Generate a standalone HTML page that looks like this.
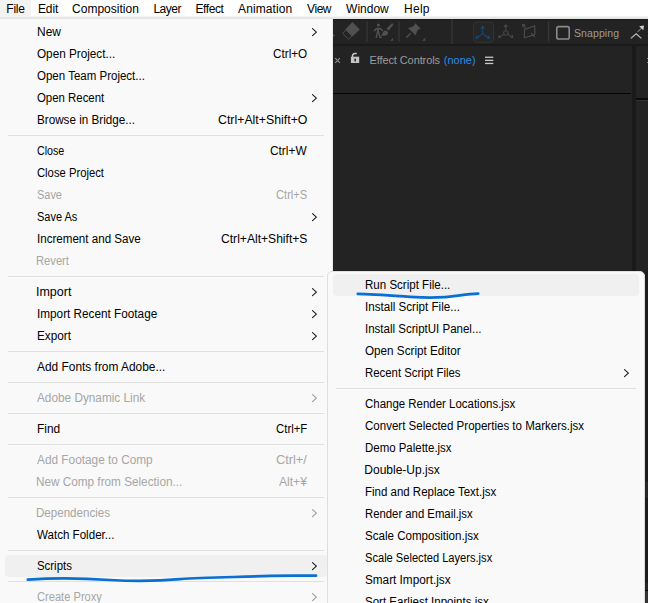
<!DOCTYPE html>
<html><head><meta charset="utf-8">
<style>
*{margin:0;padding:0;box-sizing:border-box}
html,body{width:648px;height:603px;overflow:hidden;background:#232323;font-family:"Liberation Sans",sans-serif;position:relative}
.abs{position:absolute}
#menubar{position:absolute;left:0;top:0;width:648px;height:19px;background:linear-gradient(to bottom,#ffffff 0px,#ffffff 16px,#f4f4f4 16px,#f4f4f4 17px,#e8e8e8 17px,#e8e8e8 18px,#e4e4e4 18px)}
#menubar span{position:absolute;top:3px;font-size:12px;color:#000;line-height:13px;white-space:nowrap}
#filehl{position:absolute;left:0;top:0;width:31px;height:16px;background:#f3f3f3}
#dark{position:absolute;left:333px;top:19px;width:315px;height:584px;background:#232323}
.menu{position:absolute;background:#f9f9f9}
#main{left:-8px;top:19px;width:341px;height:600px;border-right:1px solid #e8e8e8}
#sub{left:327px;top:271px;width:318px;height:360px;border:1px solid #dedede;border-radius:5px}
.it{position:absolute;height:22px;font-size:12px;line-height:22px;white-space:nowrap}
.sc{position:absolute;height:22px;font-size:12px;line-height:22px;white-space:nowrap;text-align:right}
.sep{position:absolute;height:1px;background:#e0e0e0}
.hl{position:absolute;height:22px;background:#f0f0f0;border-radius:4px}
</style></head><body>
<div id="dark"></div>
<div class="abs toptb" style="left:333px;top:19px;width:315px;height:1px;background:#1b1b1b"></div>
<div class="abs" style="left:333px;top:44px;width:315px;height:2px;background:#1a1a1a"></div>
<div class="abs" style="left:632px;top:46px;width:4px;height:557px;background:#1a1a1a"></div>
<div class="abs" style="left:333px;top:93px;width:298px;height:1px;background:#050505"></div>
<div class="abs" style="left:636px;top:98px;width:12px;height:1.5px;background:#0b0b0b"></div>
<div class="abs" style="left:636px;top:99.5px;width:12px;height:1px;background:#343434"></div>
<div class="abs" style="left:645px;top:271px;width:3px;height:332px;background:#1d1d1d"></div>
<div class="abs" style="left:645px;top:482px;width:3px;height:16px;background:#272727"></div>
<div class="abs" style="left:645px;top:583px;width:3px;height:7px;background:#262626"></div>
<div class="abs" style="left:645px;top:590px;width:3px;height:1px;background:#050505"></div>
<div class="abs" style="left:645px;top:591px;width:3px;height:12px;background:#333333"></div>
<svg class="abs" style="left:333px;top:19px" width="315" height="26" viewBox="333 19 315 26">
  <g fill="#565656">
    <circle cx="333.8" cy="35.5" r="0.9"/>
    <!-- eraser -->
    <path d="M352.5,22 L359.8,29.5 L352.5,36.4 L345.4,29.2 Z" fill="#505050"/>
    <path d="M346,29.8 L352,35.8 L348.5,39.2 L342.6,33.3 Z" fill="none" stroke="#4e4e4e" stroke-width="1" stroke-linejoin="round"/>
  </g>
  <rect x="366.3" y="21.3" width="1.4" height="20.4" fill="#353535"/>
  <rect x="398.3" y="21.3" width="1.4" height="20.4" fill="#353535"/>
  <rect x="451.3" y="19" width="1.4" height="25" fill="#353535"/>
  <rect x="547.8" y="21.3" width="1.4" height="20.4" fill="#353535"/>
  <!-- puppet + brush -->
  <g fill="#505050" stroke="#505050">
    <circle cx="378.4" cy="25" r="1.6" stroke="none"/>
    <path d="M378,28.4 L378,33.2" fill="none" stroke-width="2.2"/>
    <path d="M374.4,30.8 L376.4,28.4 L380,28.4 L382.4,30.4" fill="none" stroke-width="1.5" stroke-linecap="round" stroke-linejoin="round"/>
    <path d="M377.4,32.6 L376.3,37.4 M378.8,32.6 L379.8,37.1 L381.2,37.5" fill="none" stroke-width="1.5" stroke-linecap="round"/>
    <path d="M392.2,23 L393.6,24.4 L388.6,30.6 L386.4,28.8 Z" stroke="none"/>
    <path d="M385.2,30.4 C387.8,30.6 388.8,33 387.4,34.5 C386,36 383,35.9 380.8,35.7 C382.6,34.2 382.6,31 385.2,30.4 Z" stroke="none"/>
    <path d="M393.1,38 L393.1,40.8 L390.1,40.8 Z" stroke="none"/>
  </g>
  <!-- pin -->
  <g fill="#505050">
    <path d="M415.4,23.2 L420.6,28.4 L418,29.8 L416.6,32.2 L415.8,35.6 L408,28 L411.2,27.2 L413.8,25.8 Z"/>
    <path d="M410.3,33.7 L406.6,37.2" stroke="#505050" stroke-width="1.35" stroke-linecap="round"/>
    <path d="M425.3,37.8 L425.3,40.8 L422.2,40.8 Z"/>
  </g>
  <!-- axis button -->
  <rect x="473.7" y="22.3" width="19.8" height="20" rx="3" fill="#262626" stroke="#333" stroke-width="1"/>
  <g stroke="#1c4570" stroke-width="1.1" fill="none" stroke-linecap="round">
    <path d="M482.6,33.8 L482.6,26.5 M482.6,33.8 L476.3,38.2 M482.6,33.8 L489.1,38.2"/>
  </g>
  <g fill="#1c4570">
    <path d="M482.6,25.2 L485.2,28.6 L480,28.6 Z"/>
    <path d="M475.4,38.9 L476.3,34.9 L479,38.3 Z"/>
    <path d="M490,38.9 L486.2,38.3 L488.9,34.9 Z"/>
  </g>
  <g stroke="#454545" stroke-width="1.1" fill="none" stroke-linecap="round">
    <circle cx="505.8" cy="33" r="2.2"/>
    <path d="M505.8,30.8 L505.8,25.3 M504,34.2 L499.2,37.3 M507.6,34.2 L512.4,37.3"/>
  </g>
  <g fill="#4a4a4a">
    <path d="M505.8,24 L508,27 L503.6,27 Z"/>
    <path d="M498.2,38 L498.8,34.6 L501.2,37.4 Z"/>
    <path d="M513.4,38 L510.4,37.4 L512.8,34.6 Z"/>
  </g>
  <g stroke="#4a4a4a" stroke-width="1.2" fill="none" stroke-linecap="round" stroke-linejoin="round">
    <path d="M524.4,29.6 L534.8,25.8 L534.8,34.6 L524.4,37.8 Z"/>
    <path d="M525.6,27.6 L523,25 M531.5,33.5 L534.4,36.6"/>
  </g>
  <path d="M521.8,23.8 L525.8,24.6 L522.6,27.8 Z" fill="#4a4a4a"/>
  <!-- checkbox -->
  <rect x="556.8" y="26.6" width="12.4" height="12.4" rx="1.8" fill="none" stroke="#8a8a8a" stroke-width="1.6"/>
  <!-- snap icon -->
  <path d="M630.8,38.4 L636.2,33.9 L641.4,38.4" fill="none" stroke="#bdbdbd" stroke-width="1.2"/>
  <path d="M637.8,31.8 L641.4,28.2" stroke="#a8a8a8" stroke-width="1"/>
  <path d="M644,25.4 L643.3,30.2 L639.2,26.2 Z" fill="#d0d0d0"/>
</svg>
<div class="abs" style="left:574px;top:25.5px;font-size:10.5px;line-height:14px;color:#9c9c9c;white-space:nowrap;letter-spacing:0.1px">Snapping</div>
<!-- panel header -->
<svg class="abs" style="left:333px;top:45px" width="170" height="30" viewBox="333 45 170 30">
  <path d="M335.2,58.2 L339.9,62.8 M339.9,58.2 L335.2,62.8" stroke="#8e8e8e" stroke-width="1.1"/>
  <path d="M352.5,57.2 L352.5,55.6 C352.6,53.8 354.4,53 356.8,53.6" fill="none" stroke="#c4c4c4" stroke-width="1.5"/>
  <rect x="350.9" y="56.7" width="8.3" height="6.3" fill="#c4c4c4"/>
  <rect x="354.4" y="58.6" width="1.5" height="2.8" fill="#232323"/>
  <g fill="#c8c8c8">
    <rect x="485" y="56.6" width="8.3" height="1.3"/>
    <rect x="485" y="59.7" width="8.3" height="1.3"/>
    <rect x="485" y="62.8" width="8.3" height="1.3"/>
  </g>
</svg>
<div class="abs" style="left:369.5px;top:53px;font-size:11px;line-height:14px;color:#9c9c9c;white-space:nowrap;letter-spacing:-0.1px">Effect Controls</div>
<div class="abs" style="left:443.8px;top:53px;font-size:11px;line-height:14px;color:#2d8ae4;white-space:nowrap">(none)</div>
<div class="abs" style="left:646.5px;top:58px;width:1.5px;height:1.2px;background:#888"></div>
<div class="abs" style="left:646.5px;top:61.8px;width:1.5px;height:1.2px;background:#888"></div>

<div id="menubar">
  <div id="filehl"></div>
  <span style="left:6.30px;letter-spacing:-0.225px">File</span>
  <span style="left:38.00px;letter-spacing:-0.15px">Edit</span>
  <span style="left:72.00px;letter-spacing:0.02px">Composition</span>
  <span style="left:153.40px;letter-spacing:-0.475px">Layer</span>
  <span style="left:195.40px;letter-spacing:-0.4px">Effect</span>
  <span style="left:238.10px;letter-spacing:0.075px">Animation</span>
  <span style="left:307.10px;letter-spacing:-0.45px">View</span>
  <span style="left:346.10px;letter-spacing:0.0px">Window</span>
  <span style="left:404.10px;letter-spacing:0.25px">Help</span>
</div>
<div class="menu" id="main"></div>
<div class="it" style="left:37.40px;top:21px;color:#000000;transform:scaleX(0.9957);transform-origin:0 0">New</div>
<svg class="abs" style="left:310px;top:26.0px" width="9" height="12" viewBox="0 0 9 12"><polyline points="2.5,2.6 6.4,6.1 2.5,9.6" fill="none" stroke="#1a1a1a" stroke-width="1.1" stroke-linecap="round" stroke-linejoin="round"/></svg>
<div class="it" style="left:37.40px;top:43px;color:#000000;transform:scaleX(0.9772);transform-origin:0 0">Open Project...</div>
<div class="it" style="left:272.70px;top:43px;color:#000000;transform:scaleX(0.9771);transform-origin:0 0">Ctrl+O</div>
<div class="it" style="left:37.40px;top:65px;color:#000000;transform:scaleX(0.9589);transform-origin:0 0">Open Team Project...</div>
<div class="it" style="left:37.40px;top:87px;color:#000000;transform:scaleX(0.9507);transform-origin:0 0">Open Recent</div>
<svg class="abs" style="left:310px;top:92.0px" width="9" height="12" viewBox="0 0 9 12"><polyline points="2.5,2.6 6.4,6.1 2.5,9.6" fill="none" stroke="#1a1a1a" stroke-width="1.1" stroke-linecap="round" stroke-linejoin="round"/></svg>
<div class="it" style="left:37.43px;top:109px;color:#000000;transform:scaleX(0.9737);transform-origin:0 0">Browse in Bridge...</div>
<div class="it" style="left:217.50px;top:109px;color:#000000;transform:scaleX(1.0276);transform-origin:0 0">Ctrl+Alt+Shift+O</div>
<div class="sep" style="left:8px;top:135px;width:316px"></div>
<div class="it" style="left:37.40px;top:140px;color:#000000;transform:scaleX(0.8903);transform-origin:0 0">Close</div>
<div class="it" style="left:270.30px;top:140px;color:#000000;transform:scaleX(0.9892);transform-origin:0 0">Ctrl+W</div>
<div class="it" style="left:37.40px;top:162px;color:#000000;transform:scaleX(0.9375);transform-origin:0 0">Close Project</div>
<div class="it" style="left:37.49px;top:184px;color:#a6a6a6;transform:scaleX(0.9115);transform-origin:0 0">Save</div>
<div class="it" style="left:276.30px;top:184px;color:#a6a6a6;transform:scaleX(0.9294);transform-origin:0 0">Ctrl+S</div>
<div class="it" style="left:37.48px;top:206px;color:#000000;transform:scaleX(0.9163);transform-origin:0 0">Save As</div>
<svg class="abs" style="left:310px;top:211.0px" width="9" height="12" viewBox="0 0 9 12"><polyline points="2.5,2.6 6.4,6.1 2.5,9.6" fill="none" stroke="#1a1a1a" stroke-width="1.1" stroke-linecap="round" stroke-linejoin="round"/></svg>
<div class="it" style="left:37.43px;top:228px;color:#000000;transform:scaleX(0.966);transform-origin:0 0">Increment and Save</div>
<div class="it" style="left:221.20px;top:228px;color:#000000;transform:scaleX(1.0081);transform-origin:0 0">Ctrl+Alt+Shift+S</div>
<div class="it" style="left:36.47px;top:250px;color:#a6a6a6;transform:scaleX(0.9314);transform-origin:0 0">Revert</div>
<div class="sep" style="left:8px;top:276px;width:316px"></div>
<div class="it" style="left:36.36px;top:281px;color:#000000;transform:scaleX(1.0394);transform-origin:0 0">Import</div>
<svg class="abs" style="left:310px;top:286.0px" width="9" height="12" viewBox="0 0 9 12"><polyline points="2.5,2.6 6.4,6.1 2.5,9.6" fill="none" stroke="#1a1a1a" stroke-width="1.1" stroke-linecap="round" stroke-linejoin="round"/></svg>
<div class="it" style="left:37.42px;top:303px;color:#000000;transform:scaleX(0.9795);transform-origin:0 0">Import Recent Footage</div>
<svg class="abs" style="left:310px;top:308.0px" width="9" height="12" viewBox="0 0 9 12"><polyline points="2.5,2.6 6.4,6.1 2.5,9.6" fill="none" stroke="#1a1a1a" stroke-width="1.1" stroke-linecap="round" stroke-linejoin="round"/></svg>
<div class="it" style="left:37.42px;top:325px;color:#000000;transform:scaleX(0.9794);transform-origin:0 0">Export</div>
<svg class="abs" style="left:310px;top:330.0px" width="9" height="12" viewBox="0 0 9 12"><polyline points="2.5,2.6 6.4,6.1 2.5,9.6" fill="none" stroke="#1a1a1a" stroke-width="1.1" stroke-linecap="round" stroke-linejoin="round"/></svg>
<div class="sep" style="left:8px;top:351px;width:316px"></div>
<div class="it" style="left:37.40px;top:356px;color:#000000;transform:scaleX(0.9922);transform-origin:0 0">Add Fonts from Adobe...</div>
<div class="sep" style="left:8px;top:382px;width:316px"></div>
<div class="it" style="left:37.40px;top:387px;color:#a6a6a6;transform:scaleX(0.9827);transform-origin:0 0">Adobe Dynamic Link</div>
<svg class="abs" style="left:310px;top:392.0px" width="9" height="12" viewBox="0 0 9 12"><polyline points="2.5,2.6 6.4,6.1 2.5,9.6" fill="none" stroke="#9a9a9a" stroke-width="1.1" stroke-linecap="round" stroke-linejoin="round"/></svg>
<div class="sep" style="left:8px;top:413px;width:316px"></div>
<div class="it" style="left:37.40px;top:418px;color:#000000;transform:scaleX(0.9955);transform-origin:0 0">Find</div>
<div class="it" style="left:275.60px;top:418px;color:#000000;transform:scaleX(0.9485);transform-origin:0 0">Ctrl+F</div>
<div class="sep" style="left:8px;top:444px;width:316px"></div>
<div class="it" style="left:37.40px;top:449px;color:#a6a6a6;transform:scaleX(0.9855);transform-origin:0 0">Add Footage to Comp</div>
<div class="it" style="left:276.10px;top:449px;color:#a6a6a6;transform:scaleX(1.0621);transform-origin:0 0">Ctrl+/</div>
<div class="it" style="left:36.42px;top:471px;color:#a6a6a6;transform:scaleX(0.9791);transform-origin:0 0">New Comp from Selection...</div>
<div class="it" style="left:278.70px;top:471px;color:#a6a6a6;transform:scaleX(1.0071);transform-origin:0 0">Alt+¥</div>
<div class="sep" style="left:8px;top:497px;width:316px"></div>
<div class="it" style="left:36.44px;top:502px;color:#a6a6a6;transform:scaleX(0.9645);transform-origin:0 0">Dependencies</div>
<svg class="abs" style="left:310px;top:507.0px" width="9" height="12" viewBox="0 0 9 12"><polyline points="2.5,2.6 6.4,6.1 2.5,9.6" fill="none" stroke="#9a9a9a" stroke-width="1.1" stroke-linecap="round" stroke-linejoin="round"/></svg>
<div class="it" style="left:37.40px;top:524px;color:#000000;transform:scaleX(0.965);transform-origin:0 0">Watch Folder...</div>
<div class="sep" style="left:8px;top:550px;width:316px"></div>
<div class="hl" style="left:5px;top:555px;width:321.5px"></div>
<div class="it" style="left:37.45px;top:555px;color:#000000;transform:scaleX(0.95);transform-origin:0 0">Scripts</div>
<svg class="abs" style="left:310px;top:560.0px" width="9" height="12" viewBox="0 0 9 12"><polyline points="2.5,2.6 6.4,6.1 2.5,9.6" fill="none" stroke="#1a1a1a" stroke-width="1.1" stroke-linecap="round" stroke-linejoin="round"/></svg>
<div class="sep" style="left:8px;top:581px;width:316px"></div>
<div class="it" style="left:37.40px;top:586px;color:#a6a6a6;transform:scaleX(0.9271);transform-origin:0 0">Create Proxy</div>
<svg class="abs" style="left:310px;top:591.0px" width="9" height="12" viewBox="0 0 9 12"><polyline points="2.5,2.6 6.4,6.1 2.5,9.6" fill="none" stroke="#9a9a9a" stroke-width="1.1" stroke-linecap="round" stroke-linejoin="round"/></svg>
<div class="menu" id="sub"></div>
<div class="hl" style="left:333px;top:274px;width:305.5px"></div>
<div class="it" style="left:365.34px;top:274px;color:#000000;transform:scaleX(0.9621);transform-origin:0 0">Run Script File...</div>
<div class="it" style="left:365.33px;top:296px;color:#000000;transform:scaleX(0.9677);transform-origin:0 0">Install Script File...</div>
<div class="it" style="left:365.34px;top:318px;color:#000000;transform:scaleX(0.96);transform-origin:0 0">Install ScriptUI Panel...</div>
<div class="it" style="left:365.30px;top:340px;color:#000000;transform:scaleX(0.9745);transform-origin:0 0">Open Script Editor</div>
<div class="it" style="left:365.35px;top:362px;color:#000000;transform:scaleX(0.948);transform-origin:0 0">Recent Script Files</div>
<svg class="abs" style="left:622px;top:367.0px" width="9" height="12" viewBox="0 0 9 12"><polyline points="2.5,2.6 6.4,6.1 2.5,9.6" fill="none" stroke="#1a1a1a" stroke-width="1.1" stroke-linecap="round" stroke-linejoin="round"/></svg>
<div class="sep" style="left:336px;top:388px;width:300px"></div>
<div class="it" style="left:365.30px;top:393px;color:#000000;transform:scaleX(0.9548);transform-origin:0 0">Change Render Locations.jsx</div>
<div class="it" style="left:365.30px;top:415px;color:#000000;transform:scaleX(0.9605);transform-origin:0 0">Convert Selected Properties to Markers.jsx</div>
<div class="it" style="left:365.35px;top:437px;color:#000000;transform:scaleX(0.9544);transform-origin:0 0">Demo Palette.jsx</div>
<div class="it" style="left:364.30px;top:459px;color:#000000;transform:scaleX(1.0);transform-origin:0 0">Double-Up.jsx</div>
<div class="it" style="left:365.34px;top:481px;color:#000000;transform:scaleX(0.9566);transform-origin:0 0">Find and Replace Text.jsx</div>
<div class="it" style="left:365.36px;top:503px;color:#000000;transform:scaleX(0.9442);transform-origin:0 0">Render and Email.jsx</div>
<div class="it" style="left:365.34px;top:525px;color:#000000;transform:scaleX(0.9641);transform-origin:0 0">Scale Composition.jsx</div>
<div class="it" style="left:365.37px;top:547px;color:#000000;transform:scaleX(0.9257);transform-origin:0 0">Scale Selected Layers.jsx</div>
<div class="it" style="left:365.32px;top:569px;color:#000000;transform:scaleX(0.9791);transform-origin:0 0">Smart Import.jsx</div>
<div class="it" style="left:365.34px;top:591px;color:#000000;transform:scaleX(0.9617);transform-origin:0 0">Sort Earliest Inpoints.jsx</div>
<svg class="abs" style="left:0;top:0" width="648" height="603" viewBox="0 0 648 603">
  <path d="M357.8,293.9 C372,294 392,295.6 415,297.2 C430,298 446,297.6 460,295.4 C467,294.4 472,293.8 478.2,293.6" fill="none" stroke="#0870d2" stroke-width="2.7" stroke-linecap="round"/>
  <path d="M27.8,579.6 C45,578.5 80,578 110,580 C130,581.2 160,581 180,579.1 C205,577.6 240,577 270,575.8 C290,575.5 305,575.7 316,575.7" fill="none" stroke="#0870d2" stroke-width="2.7" stroke-linecap="round"/>
</svg>

</body></html>
